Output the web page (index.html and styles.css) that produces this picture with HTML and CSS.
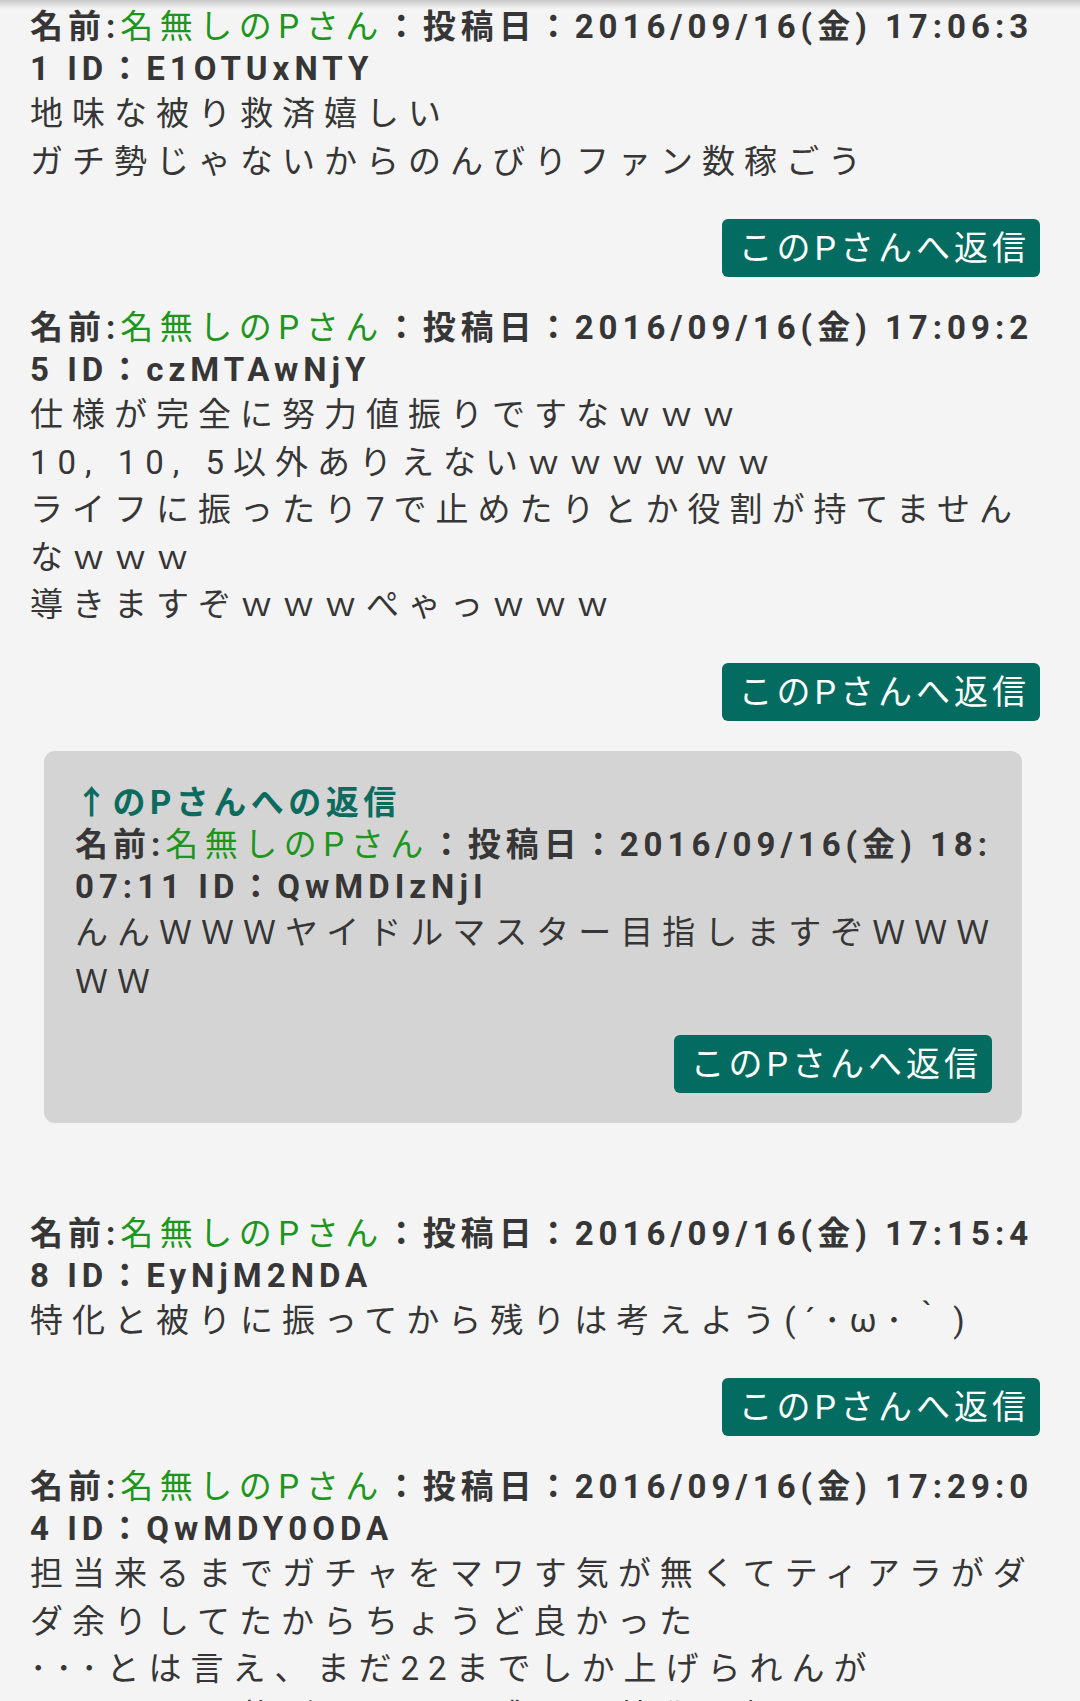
FILE: index.html
```html
<!DOCTYPE html>
<html lang="ja">
<head>
    <meta charset="UTF-8">
    <meta name="viewport" content="width=device-width, initial-scale=1.0">
    <title>コメント一覧</title>
    <link rel="stylesheet" href="styles.css">
</head>
<body>
    <div class="thread">

        <div class="post">
            <p class="post-head">名前:<span class="name">名無しのPさん</span>：投稿日：2016/09/16(金) 17:06:31 ID：E1OTUxNTY</p>
            <p class="post-body">地味な被り救済嬉しい<br>ガチ勢じゃないからのんびりファン数稼ごう</p>
            <div class="post-foot">
                <button class="reply-btn">このPさんへ返信</button>
            </div>
        </div>

        <div class="post">
            <p class="post-head">名前:<span class="name">名無しのPさん</span>：投稿日：2016/09/16(金) 17:09:25 ID：czMTAwNjY</p>
            <p class="post-body">仕様が完全に努力値振りですなｗｗｗ<br>10, 10, 5以外ありえないｗｗｗｗｗｗ<br>ライフに振ったり7で止めたりとか役割が持てませんなｗｗｗ<br>導きますぞｗｗｗぺゃっｗｗｗ</p>
            <div class="post-foot">
                <button class="reply-btn">このPさんへ返信</button>
            </div>
        </div>

        <div class="reply-box">
            <p class="reply-to">↑のPさんへの返信</p>
            <p class="post-head">名前:<span class="name">名無しのPさん</span>：投稿日：2016/09/16(金) 18:07:11 ID：QwMDIzNjI</p>
            <p class="post-body">んんＷＷＷヤイドルマスター目指しますぞＷＷＷＷＷ</p>
            <div class="post-foot">
                <button class="reply-btn">このPさんへ返信</button>
            </div>
        </div>

        <div class="post">
            <p class="post-head">名前:<span class="name">名無しのPさん</span>：投稿日：2016/09/16(金) 17:15:48 ID：EyNjM2NDA</p>
            <p class="post-body">特化と被りに振ってから残りは考えよう(´･ω･｀)</p>
            <div class="post-foot">
                <button class="reply-btn">このPさんへ返信</button>
            </div>
        </div>

        <div class="post">
            <p class="post-head">名前:<span class="name">名無しのPさん</span>：投稿日：2016/09/16(金) 17:29:04 ID：QwMDY0ODA</p>
            <p class="post-body">担当来るまでガチャをマワす気が無くてティアラがダダ余りしてたからちょうど良かった<br>･･･とは言え、まだ22までしか上げられんが<br>ライフは現状ゼロなので残りは特化に振るかな</p>
        </div>

    </div>
</body>
</html>
```

FILE: styles.css
```css
body {
    margin: 0;
    background: linear-gradient(to bottom, #c9c9c9 0, #f4f4f4 9px) top / 100% 9px no-repeat, #f4f4f4;
    color: #363636;
    font-family: Roboto, "Noto Sans CJK JP", sans-serif;
    overflow: hidden;
}

.thread {
    padding: 6px 40px 0 30px;
}

p {
    margin: 0;
}

.post-head {
    font-size: 33px;
    font-weight: bold;
    letter-spacing: 5px;
    line-height: 42px;
    word-break: break-all;
}

.post-head .name {
    color: #1c961c;
    font-weight: normal;
    letter-spacing: 6.5px;
}

.post-body {
    font-size: 33px;
    letter-spacing: 9px;
    line-height: 47.5px;
    word-break: break-all;
}

.post-foot {
    display: flex;
    justify-content: flex-end;
    margin-top: 34px;
}

.post {
    margin-bottom: 30px;
}

.reply-btn {
    height: 58px;
    padding: 0 10px 0 17px;
    background-color: #036b5f;
    color: #fff;
    border: none;
    border-radius: 6px;
    font-family: inherit;
    font-size: 34px;
    letter-spacing: 4px;
    line-height: 58px;
    cursor: pointer;
}

.reply-box {
    margin: 0 18px 90px 14px;
    padding: 31px 22px 30px 31px;
    background-color: #d4d4d4;
    border-radius: 11px;
}

.reply-box .post-body {
    letter-spacing: 9px;
    line-height: 49px;
}

.reply-box .post-foot {
    margin-top: 29px;
    margin-right: 8px;
}

.reply-to {
    color: #0b6b5e;
    font-size: 33px;
    font-weight: bold;
    letter-spacing: 4.5px;
    line-height: 42px;
}
```
